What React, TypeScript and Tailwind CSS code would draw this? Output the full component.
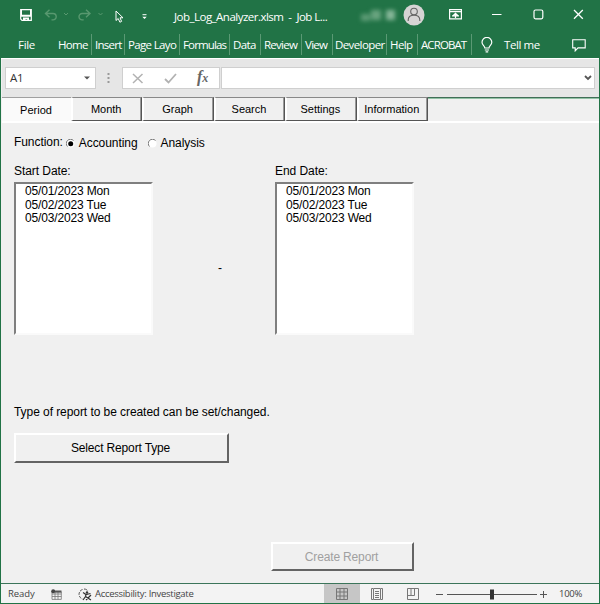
import React from "react";

const ui = "font-['Open_Sans','Noto_Sans',sans-serif]";
const arial = "font-['Liberation_Sans',Arial,sans-serif]";

const ribbon = [
  { label: "Home", cls: "w-[37px] pl-[3px] tracking-[-0.7px]" },
  { label: "Insert", cls: "w-[33px] pl-[3px] tracking-[-0.75px]" },
  { label: "Page Layo", cls: "w-[55px] pl-[3px] tracking-[-0.65px]" },
  { label: "Formulas", cls: "w-[50px] pl-[3px] tracking-[-0.85px]" },
  { label: "Data", cls: "w-[31px] pl-[3px] tracking-[-0.6px]" },
  { label: "Review", cls: "w-[41px] pl-[3px] tracking-[-0.75px]" },
  { label: "View", cls: "w-[31px] pl-[3px] tracking-[-0.7px]" },
  { label: "Developer", cls: "w-[54px] pl-[2px] tracking-[-0.6px]" },
  { label: "Help", cls: "w-[31px] pl-[3px] tracking-[-0.6px]" },
  { label: "ACROBAT", cls: "w-[54px] pl-[3px] tracking-[-0.9px]" },
];

function TitleBar() {
  return (
    <div className={`flex h-[30px] items-center text-white ${ui}`}>
      <svg className="ml-[20px] h-[12px] w-[12px] shrink-0" viewBox="0 0 12 12">
        <path d="M.7.7h10.6v10.6H2L.7 10z" fill="none" stroke="white" strokeWidth="1.2" />
        <path d="M1 5.800h10v1.900H1z M3 8.500h6V12H7.200v-1.800H5.500V12H3z M1 1h1v5H1z M10 1h1v5h-1z" fill="white" />
      </svg>
      <svg className="ml-[12px] h-[12px] w-[25px] shrink-0" viewBox="0 0 25 12" fill="none" stroke="#58986f" strokeWidth="1.4">
        <path d="M1.500 4.500h7.500a3.200 3.200 0 0 1 0 6.400H7.500 M5.500 .8L1.500 4.500l4 3.800" />
        <path d="M20 4l2 2 2-2" strokeWidth="1" />
      </svg>
      <svg className="ml-[9px] h-[12px] w-[25px] shrink-0" viewBox="0 0 25 12" fill="none" stroke="#58986f" strokeWidth="1.4">
        <path d="M12 4.500H4.200a3.200 3.200 0 0 0 0 6.400h1.500 M8 .8l4 3.700-4 3.800" />
        <path d="M20.500 4l2 2 2-2" strokeWidth="1" />
      </svg>
      <svg className="ml-[12px] mt-[3px] h-[13px] w-[9px] shrink-0" viewBox="0 0 9 13">
        <path d="M1 1v9.500l2.200-2 1.700 3.700 1.700-.8L5 7.800h3z" fill="none" stroke="white" strokeWidth="1" />
      </svg>
      <svg className="ml-[18px] mt-[3px] h-[6px] w-[5px] shrink-0" viewBox="0 0 5 6">
        <path d="M.5.7h4" stroke="white" /><path d="M.3 2.800h4.400L2.500 5z" fill="white" />
      </svg>
      <div className="ml-[27px] mt-[3px] w-[187px] shrink-0 whitespace-pre text-[11.500px] tracking-[-0.52px]">Job_Log_Analyzer.xlsm  -  Job L...</div>
      <div className="flex w-[42px] shrink-0 gap-[1px] blur-[2px]">
        <span className="mt-1 h-[7px] w-[9px] bg-[#5c9b75]" />
        <span className="h-[10px] w-[10px] bg-[#68a37f]" />
        <span className="ml-1 h-[10px] w-[9px] bg-[#85b698]" />
      </div>
      <svg className="h-[22px] w-[22px] shrink-0" viewBox="0 0 22 22">
        <circle cx="11" cy="11" r="10.5" fill="#d6d4d4" />
        <g fill="none" stroke="#646464" strokeWidth="1.1"><circle cx="11" cy="7.500" r="3.300" /><path d="M5.200 17v-1c0-3 2.500-4.800 5.800-4.800s5.800 1.800 5.800 4.800v1" /></g>
      </svg>
      <svg className="ml-[24px] -mt-[1px] h-[11px] w-[13px] shrink-0" viewBox="0 0 13 11">
        <path d="M.6.6h11.800v9.300H.6z M.6 2.600h11.800 M6.500 9V4.700 M4.300 6.500l2.200-2.200 2.200 2.200 M3 6.800h7" fill="none" stroke="white" strokeWidth="1.200" />
      </svg>
      <svg className="ml-[30px] -mt-[1px] h-[10px] w-[10px] shrink-0" viewBox="0 0 10 10"><path d="M0 4.500h9.500" stroke="white" /></svg>
      <svg className="ml-[31px] -mt-[2px] h-[11px] w-[11px] shrink-0" viewBox="0 0 11 11"><rect x="1" y="1" width="8.800" height="8.800" rx="1.500" fill="none" stroke="white" strokeWidth="1.200" /></svg>
      <svg className="ml-[29px] -mt-[2px] h-[11px] w-[11px] shrink-0" viewBox="0 0 11 11"><path d="M1 1l8.800 8.800M9.800 1L1 9.800" stroke="white" strokeWidth="1.300" /></svg>
    </div>
  );
}

function Ribbon() {
  return (
    <div className={`flex h-[28px] items-center text-[11.500px] text-white ${ui}`}>
      <div className="w-[55px] shrink-0 pl-[18px] pt-[2px] tracking-[-0.3px]">File</div>
      {ribbon.map((r) => (
        <div key={r.label} className={`flex h-[21px] shrink-0 items-center overflow-hidden whitespace-nowrap border-r border-[#5a9974] pt-[2px] ${r.cls}`}>{r.label}</div>
      ))}
      <svg className="ml-[9px] mt-[1px] h-[16px] w-[12px] shrink-0" viewBox="0 0 12 16">
        <path d="M3.800 11C3.800 9 1 8.200 1 5.300a4.800 4.800 0 0 1 9.800 0C10.800 8.200 8 9 8 11z M3.800 13h4.200 M4.600 14.800h2.600" fill="none" stroke="white" strokeWidth="1.200" />
      </svg>
      <div className="ml-[11px] w-[68px] shrink-0 pt-[2px] tracking-[-0.4px]">Tell me</div>
      <svg className="mt-[2px] h-[13px] w-[14px] shrink-0" viewBox="0 0 14 13"><path d="M.7.7h12.500v8.200H6l-2.800 3v-3H.7z" fill="none" stroke="white" strokeWidth="1.100" /></svg>
    </div>
  );
}

function FormulaBar() {
  return (
    <div className="flex h-[38px] items-start bg-[#e6e6e6] pl-[3px] pt-[8px]">
      <div className={`flex h-[22px] w-[91px] items-center justify-between border border-[#cfcfcf] bg-white pl-1 pr-[5px] text-[11.500px] text-[#333] ${ui}`}>
        <span className="tracking-[-0.3px]">A1</span>
        <svg className="h-[4px] w-[6px]" viewBox="0 0 6 4"><path d="M0 .5h6L3 3.500z" fill="#555" /></svg>
      </div>
      <svg className="ml-[11px] mt-[5px] h-[12px] w-[3px]" viewBox="0 0 3 12" fill="#999"><path d="M.5 1h2v2h-2zM.5 5h2v2h-2zM.5 9h2v2h-2z" /></svg>
      <div className="ml-[12px] flex h-[22px] w-[98px] items-center border border-[#cfcfcf] bg-white">
        <svg className="ml-[9px] h-[11px] w-[12px]" viewBox="0 0 12 11"><path d="M1 1l9.500 9M10.500 1L1 10" stroke="#b2b2b2" strokeWidth="1.500" /></svg>
        <svg className="ml-[20px] h-[11px] w-[13px]" viewBox="0 0 13 11"><path d="M1 6l3.500 3.500L12 1" fill="none" stroke="#b2b2b2" strokeWidth="1.800" /></svg>
        <span className="ml-[20px] -mt-[2px] font-['Liberation_Serif',serif] text-[16px] font-bold italic leading-none text-[#666]">f<span className="text-[12px]">x</span></span>
      </div>
      <div className="ml-[1px] flex h-[22px] w-[374px] items-center justify-end border border-[#cfcfcf] bg-white pr-[2px]">
        <svg className="h-[6px] w-[8px]" viewBox="0 0 8 6"><path d="M1 1l3 3 3-3" fill="none" stroke="#555" strokeWidth="1.800" /></svg>
      </div>
    </div>
  );
}

function Tabs() {
  return (
    <div className="flex h-[26px] border-b-2 border-white text-[11px] text-black">
      <div className="flex h-[24px] w-[69px] items-center justify-center border-t border-[#a0a0a0] bg-[#fafafa] pr-[1px] pt-[1px]">Period</div>
      {["Month", "Graph", "Search", "Settings", "Information"].map((t) => (
        <div key={t} className="flex h-[24px] w-[71.400px] items-center justify-center border-b border-l-2 border-r border-t border-b-[#555] border-l-white border-r-[#555] border-t-[#888] bg-[#f0f0f0] pr-[2px] shadow-[inset_-1px_0_#999]">{t}</div>
      ))}
      <div className="h-[2px] flex-1 border-b border-t border-b-[#91c2a5] border-t-[#416e57]" />
    </div>
  );
}

function DateList({ title }: { title: string }) {
  return (
    <div className="w-[139px]">
      <div className="h-[19px] leading-[16px]">{title}</div>
      <div className="h-[153px] border-2 border-b-[#fafafa] border-l-[#7f7f7f] border-r-[#fafafa] border-t-[#7f7f7f] bg-white pl-[9px] pt-[1px] leading-[13.600px] tracking-[-0.16px]">
        {["05/01/2023 Mon", "05/02/2023 Tue", "05/03/2023 Wed"].map((d) => <div key={d}>{d}</div>)}
      </div>
    </div>
  );
}

function Radio({ label, checked = false }: { label: string; checked?: boolean }) {
  return (
    <span className="flex items-center">
      <svg className="mr-[4px] h-[9px] w-[9px]" viewBox="0 0 9 9">
        <circle cx="4.500" cy="4.500" r="4" fill="white" />
        <path d="M1.500 7.500a4.200 4.200 0 0 1 6-6" fill="none" stroke="#777" />
        {checked && <circle cx="4.700" cy="4.700" r="2.500" />}
      </svg>
      {label}
    </span>
  );
}

const raised = "flex items-center justify-center border-2 border-b-[#646464] border-l-white border-r-[#646464] border-t-white bg-[#f0f0f0] pr-[2px]";

function StatusBar() {
  return (
    <div className={`flex h-[19px] items-center bg-[#f3f3f3] pt-px text-[9.500px] text-[#444] ${ui}`}>
      <div className="w-[50px] pl-[7px] tracking-[-0.1px]">Ready</div>
      <svg className="h-[11px] w-[11px]" viewBox="0 0 11 11"><path d="M1 3h9.300v7.400H1z M1 5h9.300 M1 7.500h9.300 M4 3v7.400 M7 3v7.400" fill="none" stroke="#777" strokeWidth=".8" /><circle cx="2.200" cy="2.200" r="2" fill="#444" /><path d="M4 1.500h6.500v2H4z" fill="#555" /></svg>
      <svg className="ml-[16px] h-[13px] w-[14px]" viewBox="0 0 14 13"><path d="M4.500 1.500a5 5 0 0 0 0 9.500 M6 1a5 5 0 0 1 4 2" fill="none" stroke="#555" strokeDasharray="3 1" /><circle cx="9" cy="4.500" r="1.200" fill="#333" /><path d="M5 4.500l3 2 4.500-1 M8 6.500l-.5 2-2.500 3.500 M7.500 8.500l5.500 3.500 M13 7l-5 5" fill="none" stroke="#333" strokeWidth="1.200" /></svg>
      <div className="ml-[3px] w-[229px] whitespace-nowrap tracking-[-0.29px]">Accessibility: Investigate</div>
      <div className="-mt-px flex h-[19px] w-[36px] items-center justify-center bg-[#c6c6c6]">
        <svg className="h-[12px] w-[12px]" viewBox="0 0 12 12"><path d="M.5.5h11v11H.5z M.5 4h11 M.5 8h11 M4 .5v11 M8 .5v11" fill="none" stroke="#777" /></svg>
      </div>
      <svg className="ml-[11px] h-[12px] w-[12px]" viewBox="0 0 12 12" fill="none" stroke="#777"><path d="M2 .5H.5v11H2 M10 .5h1.500v11H10 M2.500 .5h7v11h-7z M4 3.500h4M4 5.500h4M4 7.500h4M4 9.500h4" /></svg>
      <svg className="ml-[24px] h-[12px] w-[12px]" viewBox="0 0 12 12" fill="none" stroke="#777"><path d="M.5.5h11v11H.5z M.5 7.500h7V.5 M4 .5v7" /></svg>
      <svg className="ml-[16px] h-[13px] w-[112px]" viewBox="0 0 112 13" stroke="#555" fill="none"><path d="M1 6.500h7 M12 6.500h90 M105 6.500h7 M108.500 3v7" /><path d="M57 1.500v10" stroke="#333" strokeWidth="4" /></svg>
      <div className="ml-[12px] tracking-[-0.25px]">100%</div>
    </div>
  );
}

export default function App() {
  return (
    <div className="flex h-[604px] w-[600px] flex-col overflow-hidden bg-[#217346]">
      <TitleBar />
      <Ribbon />
      <div className="mx-px h-[1px] shrink-0 bg-white" />
      <div className={`mx-px flex flex-1 flex-col bg-[#f0f0f0] pl-px ${arial}`}>
        <FormulaBar />
        <Tabs />
        <main className="flex-1 pl-[12px] text-[12px] tracking-[-0.065px] text-black">
          <div className="flex h-[40px] items-center">
            <span className="mr-[3px] -mt-[2px]">Function:</span>
            <Radio label="Accounting" checked />
            <span className="w-[10px]" />
            <Radio label="Analysis" />
          </div>
          <div className="flex">
            <DateList title="Start Date:" />
            <div className="w-[122px] pl-[65px] pt-[96px]">-</div>
            <DateList title="End Date:" />
          </div>
          <div className="mt-[68px] leading-[18px]">Type of report to be created can be set/changed.</div>
          <button className={`mt-[12px] h-[30px] w-[215px] tracking-[-0.15px] ${raised}`}>Select Report Type</button>
          <button className={`ml-[257px] mt-[79px] h-[29px] w-[143px] tracking-[-0.15px] text-[#a0a0a0] ${raised}`}>Create Report</button>
        </main>
      </div>
      <div className="mx-px mb-px shrink-0 border-t border-[#3b755a]"><StatusBar /></div>
    </div>
  );
}
